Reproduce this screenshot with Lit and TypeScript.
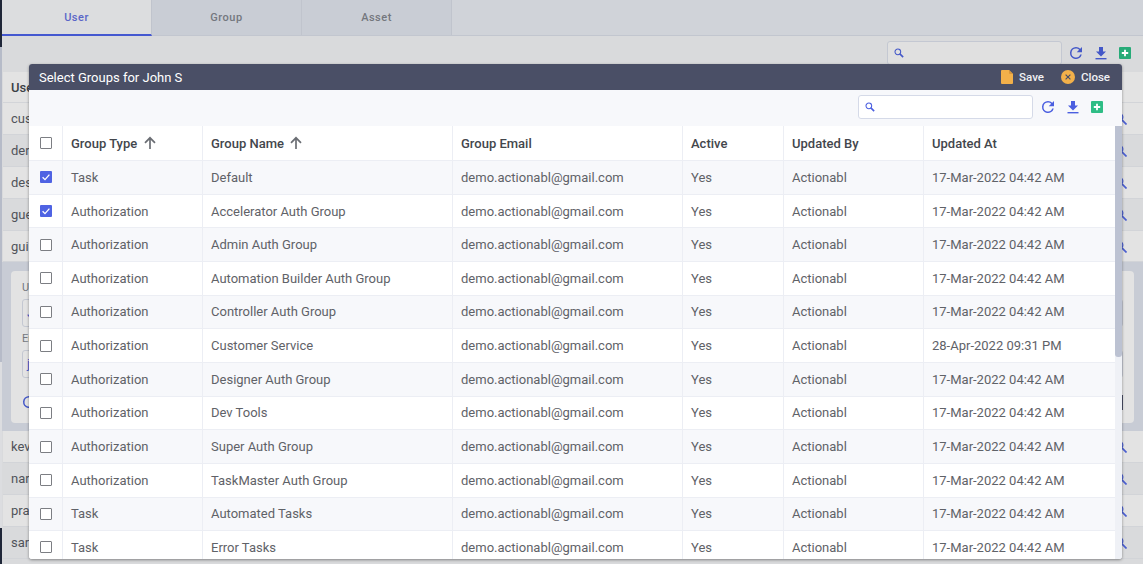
import { LitElement, html, css, svg } from 'lit';
import { customElement } from 'lit/decorators.js';

const searchIcon = html`<svg class="search-icon" viewBox="0 0 12 12" width="10" height="10" fill="none" stroke="currentColor"><circle cx="4.6" cy="4.6" r="3.4" stroke-width="1.3"></circle><path d="M7 7l4 4" stroke-width="1.9"></path></svg>`;

const rowSearchIcon = html`<svg viewBox="0 0 14 14" width="13" height="13" fill="none" stroke="#4b5fd0"><circle cx="5.5" cy="5.5" r="4" stroke-width="1.4"></circle><path d="M8.5 8.5l5 5" stroke-width="1.8"></path></svg>`;

const refreshIcon = html`<svg viewBox="0 0 24 24" width="18" height="18" fill="currentColor"><path d="M17.65 6.35A7.96 7.96 0 0 0 12 4a8 8 0 1 0 7.73 10h-2.08A6 6 0 1 1 12 6c1.66 0 3.14.69 4.22 1.78L13 11h7V4l-2.35 2.35z"></path></svg>`;

const downloadIcon = html`<svg viewBox="0 0 14 14" width="14" height="14" fill="currentColor"><path d="M5 1h4v4.5h3L7 10.5 2 5.5h3z"></path><rect x="1.5" y="12" width="11" height="1.4"></rect></svg>`;

const addIcon = html`<svg viewBox="0 0 12 12" width="12" height="12"><rect width="12" height="12" rx="1" fill="currentColor"></rect><path d="M6 2.8v6.4M2.8 6h6.4" stroke="#fff" stroke-width="1.8"></path></svg>`;

const sortArrow = svg`<svg class="sort" viewBox="0 0 14 14" width="14" height="14" fill="none" stroke="#6b6e74" stroke-width="1.7"><path d="M7 13V2M2 6.8L7 1.8l5 5"></path></svg>`;

const tools = html`
  <div class="search">${searchIcon}</div>
  <span class="icon refresh">${refreshIcon}</span>
  <span class="icon download">${downloadIcon}</span>
  <span class="icon add">${addIcon}</span>
`;

const Row = (type: string, name: string, checked = false, at = '17-Mar-2022 04:42 AM') => ({ type, name, checked, at });

const rows = [
  Row('Task', 'Default', true),
  Row('Authorization', 'Accelerator Auth Group', true),
  Row('Authorization', 'Admin Auth Group'),
  Row('Authorization', 'Automation Builder Auth Group'),
  Row('Authorization', 'Controller Auth Group'),
  Row('Authorization', 'Customer Service', false, '28-Apr-2022 09:31 PM'),
  Row('Authorization', 'Designer Auth Group'),
  Row('Authorization', 'Dev Tools'),
  Row('Authorization', 'Super Auth Group'),
  Row('Authorization', 'TaskMaster Auth Group'),
  Row('Task', 'Automated Tasks'),
  Row('Task', 'Error Tasks'),
];

@customElement('app-root')
export class AppRoot extends LitElement {
  static styles = css`
    :host {
      display: block;
      position: relative;
      width: 1143px;
      height: 564px;
      overflow: hidden;
      font-family: Roboto, "Liberation Sans", sans-serif;
      font-size: 13px;
      color: #5f6268;
    }
    .page {
      display: flex;
      height: 564px;
      background: #d9dadc;
    }
    .rail {
      display: flex;
      flex-direction: column;
      flex: none;
      width: 2px;
    }
    .rail-dark { height: 47px; background: #1f2638; }
    .rail-mid { height: 315px; background: #b6bbc8; }
    .rail-light { height: 166px; background: #dcdde0; }
    .rail-end { height: 36px; background: #1f2638; }
    .main {
      flex: 1;
      min-width: 0;
    }
    .tabs {
      display: flex;
      height: 36px;
      box-sizing: border-box;
      background: #d0d3d9;
      border-bottom: 1px solid #c2c6cf;
    }
    .tab {
      width: 150px;
      box-sizing: border-box;
      display: flex;
      align-items: center;
      justify-content: center;
      font-size: 11px;
      font-weight: 500;
      letter-spacing: 0.5px;
      color: #74777e;
      background: #c9cdd5;
      border-right: 1px solid #c0c4cd;
    }
    .tab.active {
      height: 36px;
      background: #dcdddf;
      color: #5a66c8;
      border-bottom: 2px solid #4458d0;
    }
    .tools {
      display: flex;
      flex: none;
      justify-content: flex-end;
      align-items: center;
    }
    .bg-tools {
      height: 36px;
      padding: 0 12px 2px 0;
      box-sizing: border-box;
    }
    .modal-tools {
      height: 36px;
      padding: 0 19px 2px 0;
      box-sizing: border-box;
    }
    .search {
      display: flex;
      align-items: center;
      box-sizing: border-box;
      width: 175px;
      height: 24px;
      padding-left: 6px;
      border: 1px solid #d5dae8;
      border-radius: 3px;
      background: #fff;
      color: #4b5fe0;
    }
    .bg-tools .search {
      background: #e0e0e0;
      border-color: #c4c8d2;
      color: #4458c8;
    }
    .icon { display: flex; color: #4b5fe0; }
    .bg-tools .icon { color: #4458c8; }
    .refresh { margin-left: 6px; }
    .bg-tools .refresh { margin-left: 5px; }
    .download { margin-left: 9px; }
    .add { margin-left: 11px; color: #2ebd85; }
    .bg-tools .add { color: #27ab78; }
    .bg-row {
      display: flex;
      align-items: center;
      justify-content: space-between;
      height: 31.9px;
      box-sizing: border-box;
      margin-left: 1px;
      padding: 0 16px 0 8px;
      background: #d9dadc;
      border-bottom: 1px solid #d2d4d8;
      color: #50535a;
    }
    .bg-row.light { background: #e3e3e3; }
    .bg-row.head {
      height: 31px;
      color: #3c3f46;
      font-weight: 500;
    }
    .bg-panel {
      height: 169px;
      padding: 9px 9px 0 9px;
      box-sizing: border-box;
      background: #c8ccd5;
    }
    .bg-card {
      display: flex;
      flex-direction: column;
      height: 152px;
      box-sizing: border-box;
      padding: 10px 11px 0;
      background: #e3e3e3;
      border-radius: 4px;
      color: #74777e;
      font-size: 11px;
    }
    .bg-input {
      box-sizing: border-box;
      height: 28px;
      margin: 5px 0 5px;
      padding-left: 4px;
      border: 1px solid #c4c8d2;
      border-radius: 3px;
      color: #4b5fd0;
      font-size: 13px;
      line-height: 26px;
    }
    .bg-actions {
      display: flex;
      align-items: center;
      justify-content: space-between;
      margin-top: 10px;
      margin-left: -2px;
    }
    .bg-actions .icon { color: #4458c8; }
    .bg-button {
      width: 40px;
      height: 15px;
      background: #4a4f66;
    }
    .modal {
      position: absolute;
      left: 29px;
      top: 64px;
      width: 1093px;
      height: 495px;
      display: flex;
      flex-direction: column;
      overflow: hidden;
      background: #f7f8fb;
      border-radius: 3px;
      box-shadow: 0 1px 3px rgba(0, 0, 0, 0.4);
    }
    .modal-head {
      display: flex;
      align-items: center;
      flex: none;
      height: 26px;
      padding: 0 12px 0 10px;
      background: #4a4f66;
      color: #fff;
    }
    .modal-title { flex: 1; font-size: 13px; }
    .head-btn {
      display: flex;
      align-items: center;
      gap: 6px;
      margin-left: 17px;
      font-size: 11.5px;
      font-weight: 500;
      color: #f0f1f4;
    }
    .head-btn svg { display: block; }
    .body {
      flex: 1;
      display: flex;
      min-height: 0;
    }
    .table-wrap {
      flex: 1;
      overflow: hidden;
    }
    table {
      width: 1086px;
      border-collapse: collapse;
      table-layout: fixed;
      background: #fff;
    }
    th, td {
      box-sizing: border-box;
      padding: 0 0 0 8.5px;
      border: 1px solid #eceef4;
      text-align: left;
      white-space: nowrap;
    }
    th:first-child, td:first-child { border-left: none; }
    th { border-top: none; }
    tr { height: 33.65px; }
    thead tr { height: 34.6px; }
    th {
      font-weight: 500;
      color: #43464c;
    }
    tbody tr:nth-child(odd) { background: #f7f8fb; }
    .th-in {
      display: flex;
      align-items: center;
      gap: 5.5px;
    }
    .sort { display: block; }
    th.check-cell, td.check-cell { padding: 0 0 0 11px; }
    .check {
      display: block;
      box-sizing: border-box;
      width: 12px;
      height: 12px;
      border: 1.5px solid #7c7e83;
      border-radius: 1px;
      background: #fff;
    }
    .check.on {
      border: none;
      background: #4f63e3;
    }
    .check svg { display: block; }
    .scrollbar {
      flex: none;
      width: 7px;
      background: #eff1f6;
    }
    .thumb {
      height: 231px;
      border-radius: 0 0 3px 3px;
      background: #bcc2d2;
    }
  `;

  render() {
    const before = ['cus', 'der', 'des', 'gue', 'gui'];
    const after = ['kev', 'nar', 'pra', 'sar'];
    const bgRow = (name: string, light: boolean) =>
      html`<div class="bg-row ${light ? 'light' : ''}">${name}${rowSearchIcon}</div>`;
    return html`
      <div class="page">
        <div class="rail">
          <div class="rail-dark"></div>
          <div class="rail-mid"></div>
          <div class="rail-light"></div>
          <div class="rail-end"></div>
        </div>
        <div class="main">
          <div class="tabs">
            <div class="tab active">User</div>
            <div class="tab">Group</div>
            <div class="tab">Asset</div>
          </div>
          <div class="tools bg-tools">${tools}</div>
          <div class="bg-row head light">User</div>
          ${before.map((n, i) => bgRow(n, i % 2 === 0))}
          <div class="bg-panel">
            <div class="bg-card">
              <span>Username</span>
              <div class="bg-input">John</div>
              <span>Email</span>
              <div class="bg-input">john</div>
              <div class="bg-actions">
                <span class="icon">${refreshIcon}</span>
                <span class="bg-button"></span>
              </div>
            </div>
          </div>
          ${after.map((n, i) => bgRow(n, i % 2 === 0))}
        </div>
      </div>
      <div class="modal">
        <div class="modal-head">
          <span class="modal-title">Select Groups for John S</span>
          <span class="head-btn">
            <svg viewBox="0 0 12 14" width="12" height="14"><path d="M0 1A1 1 0 0 1 1 0h7l4 4v9a1 1 0 0 1-1 1H1a1 1 0 0 1-1-1z" fill="#f2b04a"></path><path d="M8 0v3a1 1 0 0 0 1 1h3z" fill="#d8963a"></path></svg>
            Save
          </span>
          <span class="head-btn">
            <svg viewBox="0 0 14 14" width="14" height="14"><circle cx="7" cy="7" r="7" fill="#f2b04a"></circle><path d="M4.6 4.6l4.8 4.8M9.4 4.6l-4.8 4.8" stroke="#4a4f66" stroke-width="1.2"></path></svg>
            Close
          </span>
        </div>
        <div class="tools modal-tools">${tools}</div>
        <div class="body">
          <div class="table-wrap">
            <table>
              <colgroup>
                <col style="width:33px" />
                <col style="width:140px" />
                <col style="width:250px" />
                <col style="width:230px" />
                <col style="width:101px" />
                <col style="width:140px" />
                <col style="width:192px" />
              </colgroup>
              <thead>
                <tr>
                  <th class="check-cell"><span class="check"></span></th>
                  <th><span class="th-in">Group Type ${sortArrow}</span></th>
                  <th><span class="th-in">Group Name ${sortArrow}</span></th>
                  <th>Group Email</th>
                  <th>Active</th>
                  <th>Updated By</th>
                  <th>Updated At</th>
                </tr>
              </thead>
              <tbody>
                ${rows.map(
                  (r) => html`
                    <tr>
                      <td class="check-cell">
                        <span class="check ${r.checked ? 'on' : ''}">
                          ${r.checked
                            ? html`<svg viewBox="0 0 12 12" width="12" height="12" fill="none" stroke="#fff" stroke-width="1.3"><path d="M2.6 6.2l2.4 2.4 4.4-5"></path></svg>`
                            : ''}
                        </span>
                      </td>
                      <td>${r.type}</td>
                      <td>${r.name}</td>
                      <td>demo.actionabl@gmail.com</td>
                      <td>Yes</td>
                      <td>Actionabl</td>
                      <td>${r.at}</td>
                    </tr>
                  `
                )}
              </tbody>
            </table>
          </div>
          <div class="scrollbar"><div class="thumb"></div></div>
        </div>
      </div>
    `;
  }
}
